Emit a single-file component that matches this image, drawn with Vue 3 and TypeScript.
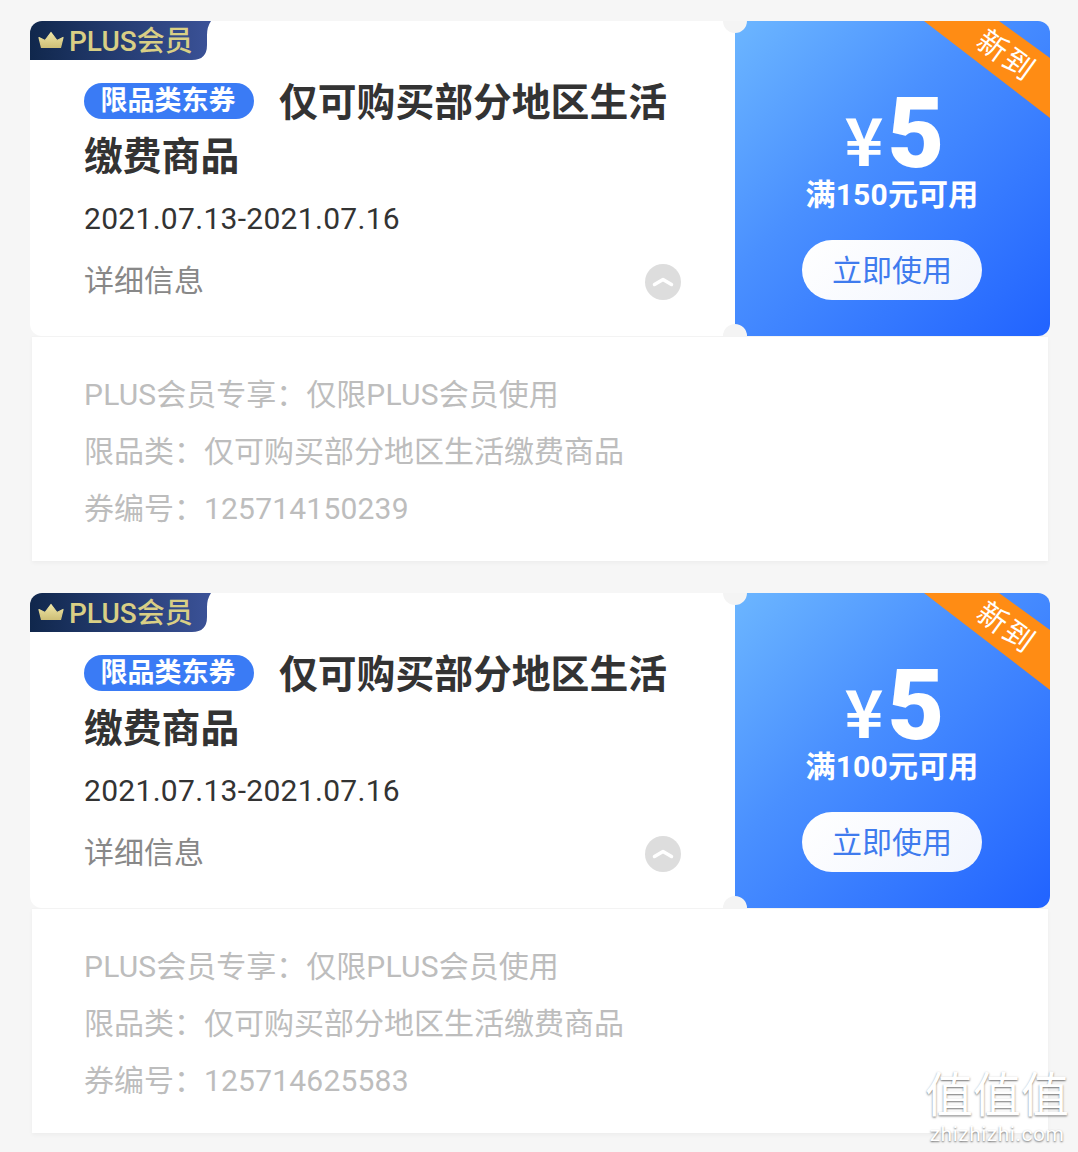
<template>
  <div class="page">
    <section v-for="c in coupons" :key="c.no" class="coupon">
      <div class="head">
        <div class="main">
          <div class="plus">
            <svg class="crown" viewBox="0 0 26 17" width="26" height="17">
              <defs>
                <linearGradient id="crown-fill" x1="0" y1="0" x2="0" y2="1">
                  <stop offset="0" stop-color="#efe6a6" />
                  <stop offset="1" stop-color="#cfc078" />
                </linearGradient>
              </defs>
              <path d="M1 6.500 7 9.500 13 1.500l6 8 6-3-2.500 10H3.500z" fill="url(#crown-fill)" stroke="url(#crown-fill)" stroke-width="1.200" stroke-linejoin="round" />
            </svg>
            <span>PLUS会员</span>
          </div>
          <h2 class="title"><span class="tag">限品类东券</span>{{ title }}</h2>
          <div class="date">2021.07.13-2021.07.16</div>
          <div class="info">
            <span>详细信息</span>
            <span class="toggle">
              <svg viewBox="0 0 36 36" width="36" height="36">
                <path d="M9.500 20.500 18 15.500l8.500 5" fill="none" stroke="#fff" stroke-width="3.500" stroke-linecap="round" stroke-linejoin="round" />
              </svg>
            </span>
          </div>
        </div>
        <div class="side">
          <div class="ribbon"></div>
          <span class="ribbon-text">新到</span>
          <div class="price"><span class="yen">¥</span><span class="num">5</span></div>
          <div class="cond">满{{ c.min }}元可用</div>
          <div class="use">立即使用</div>
        </div>
        <i class="notch top"></i>
        <i class="notch bottom"></i>
      </div>
      <div class="detail">
        <p><span class="latin">PLUS</span>会员专享：仅限<span class="latin">PLUS</span>会员使用</p>
        <p>限品类：仅可购买部分地区生活缴费商品</p>
        <p>券编号：<span class="latin">{{ c.no }}</span></p>
      </div>
    </section>
    <div class="mark">
      <div class="mark-cn">值值值</div>
      <div class="mark-en">zhizhizhi.com</div>
    </div>
  </div>
</template>

<script setup lang="ts">
type Coupon = { min: number; no: string };

const title = '仅可购买部分地区生活缴费商品';
const coupons: Coupon[] = [
  { min: 150, no: '125714150239' },
  { min: 100, no: '125714625583' },
];
</script>

<style>
html,
body {
  background: #f6f6f6;
}
</style>

<style scoped>
.page {
  position: relative;
  width: 1078px;
  height: 1152px;
  overflow: hidden;
  padding: 21px 28px 0 30px;
  box-sizing: border-box;
  background: #f6f6f6;
  display: flex;
  flex-direction: column;
  gap: 32px;
  font-family: Roboto, "Noto Sans CJK SC", sans-serif;
}
.coupon {
  display: flex;
  flex-direction: column;
  align-items: center;
}
.head {
  position: relative;
  display: flex;
  width: 1020px;
  height: 315px;
  overflow: hidden;
  border-radius: 12px;
}
.main {
  position: relative;
  width: 705px;
  padding: 55px 30px 0 54px;
  box-sizing: border-box;
  background: #fff;
}
.plus {
  position: absolute;
  left: 0;
  top: 0;
  width: 181px;
  height: 39px;
  padding: 0 0 4px 8px;
  box-sizing: border-box;
  display: flex;
  align-items: center;
  gap: 5px;
  color: #d9cf85;
  font-size: 28px;
  font-weight: 500;
  background: linear-gradient(90deg, #10274c, #3b5298);
  clip-path: path("M0 39V0H181Q177 6 177 14V24Q177 39 162 39Z");
}
.crown {
  flex: none;
  margin-top: 2px;
}
.title {
  margin: 0;
  font-size: 38.800px;
  line-height: 54px;
  font-weight: 700;
  color: #333;
}
.tag {
  display: inline-block;
  vertical-align: 6px;
  width: 170px;
  height: 36px;
  padding-right: 2px;
  box-sizing: border-box;
  margin-right: 25px;
  border-radius: 18px;
  background: #3a7bf5;
  color: #fff;
  font-size: 27px;
  line-height: 36px;
  font-weight: 700;
  text-align: center;
}
.date {
  margin-top: 15px;
  font-size: 30px;
  line-height: 40px;
  letter-spacing: 0.3px;
  color: #333;
}
.info {
  margin-top: 22px;
  display: flex;
  justify-content: space-between;
  align-items: center;
  padding-right: 24px;
  font-size: 30px;
  line-height: 40px;
  color: #888;
}
.toggle {
  width: 36px;
  height: 36px;
  border-radius: 50%;
  background: #ddd;
  display: block;
  margin-top: 2px;
}
.toggle svg {
  display: block;
}
.side {
  position: relative;
  width: 315px;
  padding-right: 1px;
  box-sizing: border-box;
  background: linear-gradient(135deg, #6cb6ff 0%, #4a90ff 40%, #2163ff 100%);
  display: flex;
  flex-direction: column;
  align-items: center;
  color: #fff;
}
.notch {
  position: absolute;
  left: 693px;
  width: 24px;
  height: 24px;
  border-radius: 50%;
  background: #f4f4f4;
}
.notch.top {
  top: -12px;
}
.notch.bottom {
  bottom: -12px;
}
.ribbon {
  position: absolute;
  inset: 0;
  background: #ff8c14;
  clip-path: polygon(189px 0, 264px 0, 315px 37px, 315px 97px);
}
.ribbon-text {
  position: absolute;
  left: 239px;
  top: 15px;
  font-size: 30px;
  line-height: 40px;
  letter-spacing: 2px;
  transform: rotate(36deg);
}
.price {
  margin-top: 67px;
  height: 92px;
  padding-left: 5px;
  display: flex;
  align-items: flex-end;
  gap: 4px;
  font-weight: 700;
}
.yen {
  font-family: "Noto Sans CJK SC", sans-serif;
  font-size: 66px;
  line-height: 86px;
}
.num {
  font-size: 98px;
  line-height: 92px;
  font-weight: 900;
}
.cond {
  font-size: 30px;
  line-height: 30px;
  font-weight: 700;
  letter-spacing: 0.2px;
}
.use {
  margin-top: 30px;
  width: 180px;
  height: 60px;
  border-radius: 30px;
  background: linear-gradient(135deg, #fff, #f1f5fe);
  color: #3f7bee;
  font-size: 30px;
  line-height: 62px;
  text-align: center;
}
.detail {
  width: 1016px;
  height: 225px;
  padding: 29px 0 0 52px;
  box-sizing: border-box;
  background: #fff;
  border-top: 1px solid #f3f3f3;
  box-shadow: 0 2px 4px rgba(0, 0, 0, 0.04);
}
.detail p {
  margin: 0;
  font-size: 30px;
  line-height: 57px;
  color: #bdbdbd;
}
.latin {
  letter-spacing: 0.2px;
}
.mark {
  position: absolute;
  right: 8px;
  bottom: 6px;
  width: 146px;
  text-align: center;
  color: #fff;
  text-shadow: 0 1px 2px rgba(0, 0, 0, 0.55);
}
.mark-cn {
  font-size: 48px;
  line-height: 52px;
  font-weight: 400;
}
.mark-en {
  font-size: 21px;
  line-height: 24px;
  letter-spacing: 0.5px;
}
</style>
